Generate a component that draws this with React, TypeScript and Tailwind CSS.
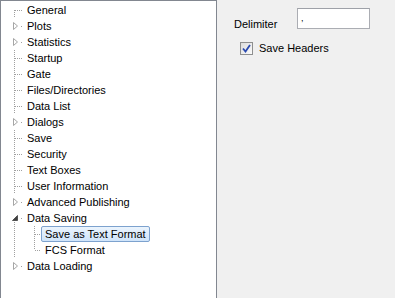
type Node = { label: string; kind: 'leaf' | 'closed' | 'open'; children?: string[] };

const nodes: Node[] = [
  { label: 'General', kind: 'leaf' },
  { label: 'Plots', kind: 'closed' },
  { label: 'Statistics', kind: 'closed' },
  { label: 'Startup', kind: 'leaf' },
  { label: 'Gate', kind: 'leaf' },
  { label: 'Files/Directories', kind: 'leaf' },
  { label: 'Data List', kind: 'leaf' },
  { label: 'Dialogs', kind: 'closed' },
  { label: 'Save', kind: 'leaf' },
  { label: 'Security', kind: 'leaf' },
  { label: 'Text Boxes', kind: 'leaf' },
  { label: 'User Information', kind: 'leaf' },
  { label: 'Advanced Publishing', kind: 'closed' },
  { label: 'Data Saving', kind: 'open', children: ['Save as Text Format', 'FCS Format'] },
  { label: 'Data Loading', kind: 'closed' },
];

const dot = '#a0a0a0';

function Glyph({ kind, first }: { kind: Node['kind']; first: boolean }) {
  if (kind === 'closed')
    return (
      <svg width="20" height="16" className="shrink-0">
        <path d="M9.5 4.5 L13.5 8 L9.5 11.5 Z" fill="white" stroke="#a6a6a6" />
        <path d="M17 8.5 h1" stroke={dot} />
      </svg>
    );
  if (kind === 'open')
    return (
      <svg width="20" height="16" className="shrink-0">
        <path d="M13.5 5.5 L13.5 10.5 L8.5 10.5 Z" fill="#404040" stroke="#404040" strokeWidth="0.8" />
        <path d="M17 8.5 h1" stroke={dot} />
        <path d="M10.5 12 V16" stroke={dot} strokeDasharray="1 1" />
      </svg>
    );
  return (
    <svg width="20" height="16" className="shrink-0">
      <path d={first ? 'M10.5 8 V16' : 'M10.5 0 V16'} stroke={dot} strokeDasharray="1 1" />
      <path d="M11 8.5 H19" stroke={dot} strokeDasharray="1 1" />
    </svg>
  );
}

export default function App() {
  return (
    <div
      className="flex w-[395px] h-[298px] bg-[#f0f0f0] text-[11px] text-black overflow-hidden"
      style={{ fontFamily: 'Tahoma, "Liberation Sans", Arial, sans-serif' }}
    >
      <div className="w-[217px] shrink-0 bg-white border-l border-t border-r border-[#828790] pt-[1px] pl-[3px]">
        {nodes.map((n, idx) => (
          <div key={n.label}>
            <div className="flex items-center h-4">
              <Glyph kind={n.kind} first={idx === 0} />
              <span className="pl-[3px] leading-4 whitespace-nowrap">{n.label}</span>
            </div>
            {n.children &&
              n.children.map((c, i) => (
                <div key={c} className="flex items-center h-4">
                  <svg width="37" height="16" className="shrink-0">
                    <path d="M10.5 0 V16" stroke={dot} strokeDasharray="1 1" />
                    <path d={i === 0 ? 'M30.5 0 V16' : 'M30.5 0 V8'} stroke={dot} strokeDasharray="1 1" />
                    <path d="M31 8.5 H37" stroke={dot} strokeDasharray="1 1" />
                  </svg>
                  {i === 0 ? (
                    <span className="px-[3px] leading-[14px] whitespace-nowrap border border-[#7da2ce] rounded-[2px] bg-gradient-to-b from-[#ebf4fd] to-[#cfe4fa]">
                      {c}
                    </span>
                  ) : (
                    <span className="pl-[4px] leading-4 whitespace-nowrap">{c}</span>
                  )}
                </div>
              ))}
          </div>
        ))}
      </div>
      <div className="flex-1 pl-[17px] pt-[8px]">
        <div className="flex items-start">
          <span className="w-[63px] mt-[10px] leading-[13px]">Delimiter</span>
          <div className="w-[73px] h-[21px] bg-white border border-[#abadb3] border-t-[#9ea1a8] relative">
            <span className="absolute left-[3px] top-[3px] text-[9px] leading-[13px]">,</span>
          </div>
        </div>
        <label className="flex items-center gap-[6px] mt-[11px] ml-[6px]">
          <span className="w-[13px] h-[13px] border border-[#8e8f8f] bg-gradient-to-br from-[#dcdcdc] to-[#fbfbfb] flex items-center justify-center">
            <svg width="9" height="9" viewBox="0 0 9 9">
              <path d="M1 4.5 L3.5 7.5 L8 1" fill="none" stroke="#2a4ab0" strokeWidth="1.8" />
            </svg>
          </span>
          <span className="leading-[13px]">Save Headers</span>
        </label>
      </div>
    </div>
  );
}
